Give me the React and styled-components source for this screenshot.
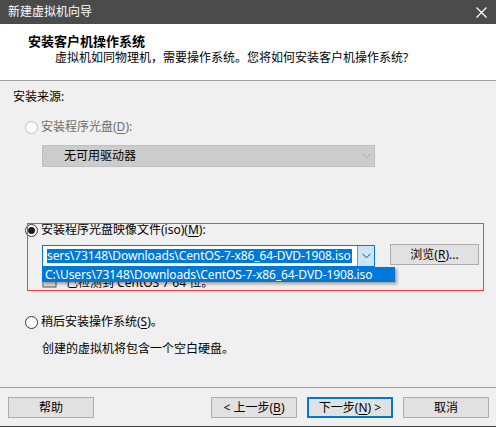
import React from "react";
import styled, { createGlobalStyle } from "styled-components";

const GlobalStyle = createGlobalStyle`
    html, body {
        margin: 0;
        padding: 0;
        background: #f0f0f0;
    }
    body {
        font-family: "Noto Sans", "Noto Sans CJK SC", sans-serif;
        font-size: 12px;
        line-height: 16px;
        color: #000;
    }
`

const Window = styled.div`
    width: 496px;
    height: 427px;
    display: flex;
    flex-direction: column;
    background: #f0f0f0;
    overflow: hidden;
`

const TitleBar = styled.div`
    height: 24px;
    flex: none;
    background: #4b4b4b;
    color: #ffffff;
    display: flex;
    align-items: center;
    justify-content: space-between;
    padding: 0 8px;
    box-sizing: border-box;
`

const TitleText = styled.span`
    font-size: 12px;
    line-height: 16px;
`

const Header = styled.div`
    height: 57px;
    flex: none;
    background: #ffffff;
    border-bottom: 1px solid #a0a0a0;
    padding: 9px 0 0 28px;
    box-sizing: border-box;
`

const HeaderTitle = styled.div`
    font-weight: bold;
    font-size: 13px;
    line-height: 16px;
`

const HeaderSub = styled.div`
    margin-top: 1px;
    padding-left: 27px;
    line-height: 16px;
`

const Body = styled.div`
    flex: 1;
    position: relative;
    padding: 8px 0 0 13px;
    display: flex;
    flex-direction: column;
`

const Label = styled.div`
    line-height: 16px;
    margin-top: ${p => p.$top || 0}px;
    padding-left: ${p => p.$indent || 0}px;
    color: ${p => (p.$disabled ? "#6d6d6d" : "#000")};
    white-space: nowrap;
`

const RadioRow = styled.label`
    display: flex;
    align-items: center;
    gap: 3px;
    margin-top: ${p => p.$top || 0}px;
    padding-left: 12px;
    height: 16px;
    color: ${p => (p.$disabled ? "#6d6d6d" : "#000")};
    white-space: nowrap;
`

const RadioCircle = styled.span`
    width: 11px;
    height: 11px;
    border-radius: 50%;
    border: 1px solid ${p => (p.$disabled ? "#bcbcbc" : "#333333")};
    background: #ffffff;
    display: flex;
    align-items: center;
    justify-content: center;
    flex: none;
    &::after {
        content: "";
        width: 7px;
        height: 7px;
        border-radius: 50%;
        background: #1a1a1a;
        display: ${p => (p.$checked ? "block" : "none")};
    }
`

const Key = styled.span`
    text-decoration: underline;
    text-underline-offset: 2px;
`

const ComboRow = styled.div`
    display: flex;
    align-items: flex-start;
    gap: 15px;
    margin-top: ${p => p.$top || 0}px;
    padding-left: 29px;
    position: relative;
`

const Combo = styled.div`
    width: 333px;
    height: 22px;
    box-sizing: border-box;
    display: flex;
    align-items: center;
    border: 1px solid ${p => (p.$disabled ? "#bfbfbf" : "#0078d7")};
    background: ${p => (p.$disabled ? "#cccccc" : "#ffffff")};
    flex: none;
`

const ComboText = styled.div`
    flex: 1;
    padding-left: ${p => p.$pad || 4}px;
    overflow: hidden;
    white-space: nowrap;
`

const Selected = styled.span`
    background: #0078d7;
    color: #ffffff;
    padding: 0 1px 0 0;
    display: inline-block;
    line-height: 14px;
    letter-spacing: -0.1px;
`

const ComboButton = styled.div`
    width: 17px;
    height: 20px;
    box-sizing: border-box;
    display: flex;
    align-items: center;
    justify-content: center;
    flex: none;
    background: ${p => (p.$active ? "#cce4f7" : "transparent")};
    border-left: 1px solid ${p => (p.$active ? "#569de5" : "transparent")};
`

const Button = styled.button`
    width: ${p => p.$w || 86}px;
    height: 21px;
    box-sizing: border-box;
    background: #e1e1e1;
    border: ${p => (p.$default ? "2px solid #0078d7" : "1px solid #adadad")};
    font-family: inherit;
    font-size: 12px;
    line-height: 16px;
    color: #000;
    padding: 0;
    margin-top: ${p => p.$top || 0}px;
`

const DropList = styled.div`
    position: absolute;
    left: 29px;
    top: 22px;
    width: 353px;
    height: 15px;
    background: #0078d7;
    color: #ffffff;
    padding-left: 3px;
    box-sizing: border-box;
    line-height: 15px;
    white-space: nowrap;
    box-shadow: 2px 2px 3px rgba(0, 0, 0, 0.35);
    letter-spacing: -0.1px;
`

const DetectRow = styled.div`
    display: flex;
    align-items: center;
    gap: 8px;
    margin-top: 8px;
    padding-left: 29px;
    height: 16px;
`

const Annotation = styled.div`
    position: absolute;
    left: 27px;
    top: 142px;
    width: 457px;
    height: 68px;
    box-sizing: border-box;
    border: 1px solid #ff3b3b;
    pointer-events: none;
`

const Footer = styled.div`
    height: 40px;
    flex: none;
    border-top: 1px solid #a0a0a0;
    border-bottom: 1px solid #3c3c3c;
    box-sizing: border-box;
    display: flex;
    align-items: flex-start;
    padding: 9px 0 0 8px;
`

const NavGroup = styled.div`
    display: flex;
    gap: 10px;
    margin-left: auto;
    margin-right: 7px;
`

const Chevron = ({ color }) => (
    <svg width="9" height="6" viewBox="0 0 9 6">
        <path d="M0.5 0.8 L4.5 4.8 L8.5 0.8" fill="none" stroke={color} strokeWidth="1" />
    </svg>
)

const CloseIcon = () => (
    <svg width="11" height="11" viewBox="0 0 11 11" style={{ marginRight: 1 }}>
        <path d="M0.5 0.5 L10.5 10.5 M10.5 0.5 L0.5 10.5" stroke="#ffffff" strokeWidth="1.2" />
    </svg>
)

const InfoIcon = () => (
    <svg width="16" height="12" viewBox="0 0 16 12">
        <rect x="1" y="2" width="13" height="8" fill="#e0e0e0" stroke="#555" />
    </svg>
)

const App = () => {
    return (
        <Window>
            <GlobalStyle />
            <TitleBar>
                <TitleText>新建虚拟机向导</TitleText>
                <CloseIcon />
            </TitleBar>
            <Header>
                <HeaderTitle>安装客户机操作系统</HeaderTitle>
                <HeaderSub>虚拟机如同物理机，需要操作系统。您将如何安装客户机操作系统?</HeaderSub>
            </Header>
            <Body>
                <Label>安装来源:</Label>
                <RadioRow $top={14} $disabled>
                    <RadioCircle $disabled />
                    <span>安装程序光盘(<Key>D</Key>):</span>
                </RadioRow>
                <ComboRow $top={10}>
                    <Combo $disabled>
                        <ComboText $pad={21}>无可用驱动器</ComboText>
                        <ComboButton>
                            <Chevron color="#a8a8a8" />
                        </ComboButton>
                    </Combo>
                </ComboRow>
                <RadioRow $top={55}>
                    <RadioCircle $checked />
                    <span>安装程序光盘映像文件(iso)(<Key>M</Key>):</span>
                </RadioRow>
                <ComboRow $top={7}>
                    <Combo>
                        <ComboText $pad={4}>
                            <Selected>sers\73148\Downloads\CentOS-7-x86_64-DVD-1908.iso</Selected>
                        </ComboText>
                        <ComboButton $active>
                            <Chevron color="#404040" />
                        </ComboButton>
                    </Combo>
                    <Button $w={89} $top={-1}>浏览(<Key>R</Key>)...</Button>
                    <DropList>C:\Users\73148\Downloads\CentOS-7-x86_64-DVD-1908.iso</DropList>
                </ComboRow>
                <DetectRow>
                    <InfoIcon />
                    <span>已检测到 CentOS 7 64 位。</span>
                </DetectRow>
                <RadioRow $top={23}>
                    <RadioCircle />
                    <span>稍后安装操作系统(<Key>S</Key>)。</span>
                </RadioRow>
                <Label $top={11} $indent={29}>创建的虚拟机将包含一个空白硬盘。</Label>
                <Annotation />
            </Body>
            <Footer>
                <Button $w={86}>帮助</Button>
                <NavGroup>
                    <Button $w={86}>&lt; 上一步(<Key>B</Key>)</Button>
                    <Button $w={86} $default>下一步(<Key>N</Key>) &gt;</Button>
                    <Button $w={86}>取消</Button>
                </NavGroup>
            </Footer>
        </Window>
    );
};

export default App;
